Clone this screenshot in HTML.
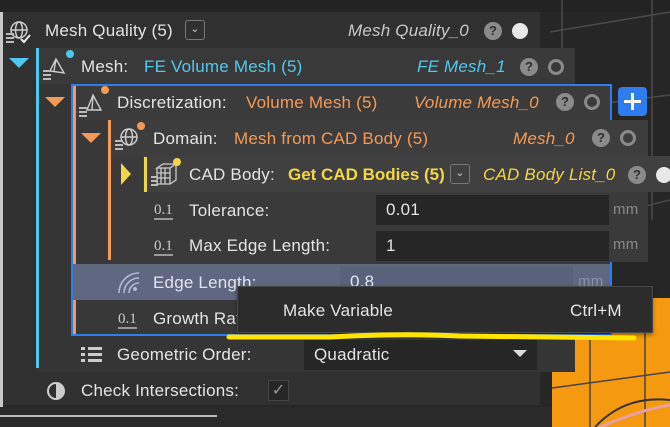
<!DOCTYPE html>
<html><head><style>
*{margin:0;padding:0;box-sizing:border-box}
body{width:670px;height:427px;overflow:hidden;background:#262626;font-family:"Liberation Sans",sans-serif;font-size:17px;letter-spacing:0.2px;color:#e4e4e4;position:relative}
.a{position:absolute}
.t{position:absolute;white-space:nowrap;line-height:20px}
.i{font-style:italic}
.cy{color:#52c8ee}.or{color:#f59a55}.ye{color:#f2d548}
.q{position:absolute;width:18px;height:18px;border-radius:50%;background:#8a8a8a;color:#2e2e2e;font-weight:bold;font-size:13px;text-align:center;line-height:18px;letter-spacing:0}
.o{position:absolute;width:16px;height:16px;border-radius:50%;border:3px solid #8a8a8a}
.f{position:absolute;width:16px;height:16px;border-radius:50%;background:#e8e8e8}
.inp{position:absolute;background:#262626}
.mm{position:absolute;color:#8a8a8a;font-size:15px}
.ic{position:absolute;font-family:"Liberation Serif",serif;font-size:15px;color:#ccc;border-bottom:2px solid #999;line-height:16px;letter-spacing:0}
.dot{position:absolute;width:8px;height:8px;border-radius:50%}
</style></head><body>
<div class="a" style="left:0;top:0;width:670px;height:12px;background:#232323"></div>
<svg class="a" style="left:0;top:0" width="670" height="427">
<g stroke="#4a4a4a" stroke-width="1.5" fill="none">
<line x1="550" y1="32" x2="670" y2="12"/><line x1="550" y1="110" x2="670" y2="95"/>
<line x1="610" y1="215" x2="670" y2="200"/><line x1="562" y1="0" x2="562" y2="300"/>
<line x1="652" y1="0" x2="652" y2="220"/>
</g>
</svg>
<!-- orange 3D view -->
<div class="a" style="left:576px;top:298px;width:94px;height:129px;background:#f59a10"></div>
<div class="a" style="left:552px;top:300px;width:24px;height:127px;background:#f59a10"></div>
<svg class="a" style="left:0;top:0" width="670" height="427">
<g stroke="#444" stroke-width="1.5" fill="none">
<line x1="552" y1="388" x2="670" y2="372"/><line x1="590" y1="300" x2="590" y2="427"/><line x1="645" y1="296" x2="645" y2="427"/>
</g>
<path d="M595 427 Q625 395 670 400" fill="none" stroke="#333" stroke-width="2"/>
<path d="M600 427 Q640 410 670 405" fill="none" stroke="#e8a0a0" stroke-width="3"/>
</svg>
<!-- main panel -->
<div class="a" style="left:0;top:12px;width:3px;height:395px;background:#c8c8c8"></div>
<div class="a" style="left:3px;top:12px;width:537px;height:393px;background:#303030"></div>
<div class="a" style="left:0;top:407px;width:552px;height:20px;background:#2a2a2a"></div>
<div class="a" style="left:0;top:415px;width:217px;height:2px;background:#bbb"></div>
<svg class="a" style="left:6px;top:20px" width="28" height="24"><g fill="none" stroke="#ccc" stroke-width="1.5"><circle cx="13" cy="10" r="8"/><ellipse cx="13" cy="10" rx="3.5" ry="8"/><line x1="5" y1="10" x2="21" y2="10"/></g><g fill="#bbb"><rect x="0" y="13" width="8" height="2"/><rect x="0" y="17" width="8" height="2"/><rect x="0" y="21" width="8" height="2"/></g><path d="M15 19 l3 3 6-7" stroke="#eee" stroke-width="2" fill="none"/></svg>
<div class="t" style="left:45px;top:21px">Mesh Quality (5)</div>
<div class="a" style="left:185px;top:20px;width:20px;height:20px;border:1.5px solid #777;border-radius:3px;color:#ccc;font-size:11px;text-align:center;line-height:17px">&#8964;</div>
<div class="t i" style="left:348px;top:21px;color:#c8c8c8">Mesh Quality_0</div>
<div class="q" style="left:484px;top:22px">?</div><div class="f" style="left:512px;top:23px"></div>
<!-- Mesh -->
<div class="a" style="left:36px;top:48px;width:539px;height:324px;background:#353535"></div>
<div class="a" style="left:36px;top:48px;width:3px;height:320px;background:#4fc8ef"></div>
<div class="a" style="left:39px;top:48px;width:536px;height:36px;background:#393939"></div>
<svg class="a" style="left:9px;top:58px" width="20" height="12"><polygon points="0,0 20,0 10,10" fill="#4fc8ef"/></svg>
<svg class="a" style="left:42px;top:55px" width="26" height="26"><path d="M14 4 L22 18 L8 16 Z M14 4 L12 16" fill="none" stroke="#ccc" stroke-width="1.4"/><g fill="#bbb"><rect x="1" y="15" width="8" height="2"/><rect x="1" y="19" width="8" height="2"/><rect x="1" y="23" width="8" height="2"/></g></svg>
<div class="dot" style="left:66px;top:50px;background:#4fc8ef"></div>
<div class="t" style="left:81px;top:57px">Mesh:</div>
<div class="t cy" style="left:144px;top:57px">FE Volume Mesh (5)</div>
<div class="t i cy" style="left:417px;top:57px">FE Mesh_1</div>
<div class="q" style="left:520px;top:58px">?</div><div class="o" style="left:548px;top:59px"></div>
<!-- Discretization -->
<div class="a" style="left:71px;top:84px;width:541px;height:252px;border:2px solid #2e7cf0;background:#383838"></div>
<div class="a" style="left:73px;top:86px;width:537px;height:34px;background:#3b3b3b"></div>
<div class="a" style="left:73px;top:86px;width:3px;height:248px;background:#f59a55"></div>
<svg class="a" style="left:45px;top:97px" width="20" height="11"><polygon points="0,0 20,0 10,10" fill="#f59a55"/></svg>
<svg class="a" style="left:78px;top:92px" width="26" height="26"><path d="M15 3 L23 18 L9 18 Z M15 3 L14 18" fill="none" stroke="#ccc" stroke-width="1.4"/><g fill="#bbb"><rect x="1" y="15" width="8" height="2"/><rect x="1" y="19" width="8" height="2"/><rect x="1" y="23" width="8" height="2"/></g></svg>
<div class="dot" style="left:101px;top:86px;background:#f59a55"></div>
<div class="t" style="left:117px;top:93px">Discretization:</div>
<div class="t or" style="left:246px;top:93px">Volume Mesh (5)</div>
<div class="t i or" style="left:414px;top:93px">Volume Mesh_0</div>
<div class="q" style="left:556px;top:93px">?</div><div class="o" style="left:584px;top:94px"></div>
<div class="a" style="left:618px;top:87px;width:29px;height:29px;background:#2e7cf0;border-radius:4px"></div>
<div class="a" style="left:624px;top:100px;width:17px;height:3px;background:#fff"></div>
<div class="a" style="left:631px;top:93px;width:3px;height:17px;background:#fff"></div>
<!-- Domain -->
<div class="a" style="left:107px;top:120px;width:541px;height:142px;background:#3a3a3a"></div>
<div class="a" style="left:108px;top:120px;width:3px;height:140px;background:#f59a55"></div>
<div class="a" style="left:111px;top:120px;width:537px;height:36px;background:#3d3d3d"></div>
<svg class="a" style="left:81px;top:133px" width="20" height="11"><polygon points="0,0 20,0 10,10" fill="#f59a55"/></svg>
<svg class="a" style="left:114px;top:126px" width="28" height="26"><g fill="none" stroke="#ccc" stroke-width="1.5"><circle cx="15" cy="11" r="8"/><ellipse cx="15" cy="11" rx="3.5" ry="8"/><line x1="7" y1="11" x2="23" y2="11"/></g><g fill="#bbb"><rect x="1" y="14" width="8" height="2"/><rect x="1" y="18" width="8" height="2"/><rect x="1" y="22" width="8" height="2"/></g></svg>
<div class="dot" style="left:137px;top:122px;background:#f59a55"></div>
<div class="t" style="left:153px;top:129px">Domain:</div>
<div class="t or" style="left:234px;top:129px">Mesh from CAD Body (5)</div>
<div class="t i or" style="left:513px;top:129px">Mesh_0</div>
<div class="q" style="left:592px;top:129px">?</div><div class="o" style="left:620px;top:130px"></div>
<!-- CAD Body -->
<div class="a" style="left:143px;top:156px;width:527px;height:36px;background:#404040"></div>
<div class="a" style="left:144px;top:157px;width:3px;height:35px;background:#f2d548"></div>
<svg class="a" style="left:121px;top:163px" width="11" height="22"><polygon points="0,0 10,11 0,22" fill="#f2d548"/></svg>
<svg class="a" style="left:150px;top:162px" width="28" height="26"><g fill="none" stroke="#ccc" stroke-width="1.3"><path d="M7 6 L13 2 L26 2 L20 6 Z M7 6 H20 V22 H7 Z M20 6 L26 2 V18 L20 22 M11 6 V22 M15 6 V22 M7 11 H20 M7 16 H20"/></g><g fill="#bbb"><rect x="1" y="14" width="7" height="2"/><rect x="1" y="18" width="7" height="2"/><rect x="1" y="22" width="7" height="2"/></g></svg>
<div class="dot" style="left:173px;top:158px;background:#f2d548"></div>
<div class="t" style="left:189px;top:165px">CAD Body:</div>
<div class="t ye" style="left:288px;top:165px;font-weight:bold;letter-spacing:0">Get CAD Bodies (5)</div>
<div class="a" style="left:450px;top:164px;width:20px;height:20px;border:1.5px solid #777;border-radius:3px;color:#ccc;font-size:11px;text-align:center;line-height:17px">&#8964;</div>
<div class="t i ye" style="left:483px;top:165px">CAD Body List_0</div>
<div class="q" style="left:628px;top:166px">?</div><div class="f" style="left:656px;top:167px"></div>
<!-- Tolerance -->
<div class="ic" style="left:154px;top:202px">0.1</div>
<div class="t" style="left:189px;top:201px">Tolerance:</div>
<div class="inp" style="left:376px;top:195px;width:233px;height:30px"></div>
<div class="t" style="left:386px;top:200px">0.01</div>
<div class="mm" style="left:613px;top:201px">mm</div>
<div class="ic" style="left:154px;top:238px">0.1</div>
<div class="t" style="left:189px;top:236px">Max Edge Length:</div>
<div class="inp" style="left:376px;top:231px;width:233px;height:30px"></div>
<div class="t" style="left:386px;top:236px">1</div>
<div class="mm" style="left:613px;top:236px">mm</div>
<!-- Edge Length highlight -->
<div class="a" style="left:73px;top:264px;width:537px;height:36px;background:#5f6880"></div>
<div class="a" style="left:340px;top:266px;width:233px;height:32px;background:#59627a"></div>
<svg class="a" style="left:116px;top:268px" width="26" height="26"><g fill="none" stroke="#b5bccb" stroke-width="1.6"><path d="M3 25 A20 20 0 0 1 23 5"/><path d="M8 25 A15 15 0 0 1 23 10"/><path d="M13 25 A10 10 0 0 1 23 15"/></g><circle cx="19" cy="21" r="2" fill="#b5bccb"/></svg>
<div class="t" style="left:153px;top:273px;color:#dfe4f0">Edge Length:</div>
<div class="t" style="left:350px;top:272px;color:#dfe4f0">0.8</div>
<div class="mm" style="left:578px;top:273px;color:#8890a5">mm</div>
<div class="ic" style="left:118px;top:311px">0.1</div>
<div class="t" style="left:153px;top:309px">Growth Rate</div>
<!-- Geometric Order -->
<div class="a" style="left:81px;top:347px;width:4px;height:3px;background:#ccc;box-shadow:0 6px #ccc,0 12px #ccc"></div>
<div class="a" style="left:88px;top:347px;width:14px;height:3px;background:#ccc;box-shadow:0 6px #ccc,0 12px #ccc"></div>
<div class="t" style="left:117px;top:345px">Geometric Order:</div>
<div class="inp" style="left:304px;top:340px;width:233px;height:30px"></div>
<div class="t" style="left:314px;top:345px">Quadratic</div>
<svg class="a" style="left:513px;top:350px" width="14" height="8"><polygon points="0,0 14,0 7,7" fill="#ddd"/></svg>
<!-- Check -->
<svg class="a" style="left:46px;top:381px" width="20" height="20"><circle cx="10" cy="10" r="8" fill="none" stroke="#ccc" stroke-width="2"/><path d="M10 2 A8 8 0 0 1 10 18 Z" fill="#ccc"/></svg>
<div class="t" style="left:81px;top:381px">Check Intersections:</div>
<div class="a" style="left:268px;top:380px;width:21px;height:21px;background:#262626;border:1px solid #444;color:#999;font-size:16px;text-align:center;line-height:19px">&#10003;</div>
<!-- context menu -->
<div class="a" style="left:237px;top:286px;width:416px;height:47px;background:#2c2c2c;border:1px solid #484848;box-shadow:0 2px 4px rgba(0,0,0,.4)"></div>
<div class="t" style="left:283px;top:301px;font-size:17px">Make Variable</div>
<div class="t" style="left:570px;top:301px;font-size:17px">Ctrl+M</div>
<svg class="a" style="left:0;top:0" width="670" height="427"><path d="M229 337 L330 337 Q400 333 460 336 L634 338" fill="none" stroke="#ffe400" stroke-width="5" stroke-linecap="round"/></svg>
</body></html>
